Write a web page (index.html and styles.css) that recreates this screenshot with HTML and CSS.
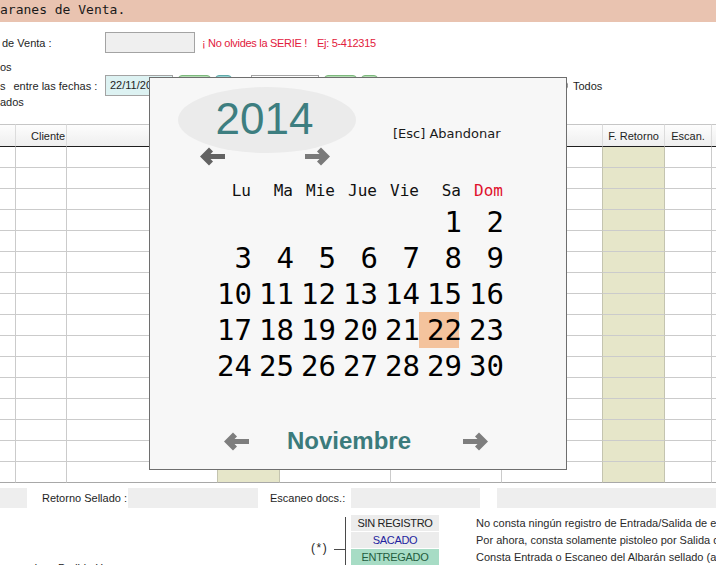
FILE: index.html
```html
<!DOCTYPE html>
<html lang="es">
<head>
<meta charset="utf-8">
<title>Albaranes de Venta</title>
<link rel="stylesheet" href="styles.css">
</head>
<body>
<div class="topbar">aranes de Venta.</div>

<div class="form">
  <div class="row r1">
    <span class="lbl lbl-venta">de Venta :</span>
    <span class="field gray"></span>
    <span class="warn">¡ No olvides la SERIE !</span><span class="warn ej">Ej: 5-412315</span>
  </div>
  <div class="row r2">os</div>
  <div class="row r3">
    <span class="lbl"><span>s</span><span class="lbl-gap">entre las fechas :</span></span>
    <span class="field date">22/11/2014</span>
    <span class="btn green wide"></span><span class="btn teal narrow"></span>
    <span class="field date2"></span>
    <span class="btn green wide"></span><span class="btn green narrow"></span>
    <span class="radio"></span><span class="todos">Todos</span>
  </div>
  <div class="row r4">ados</div>
</div>

<div class="grid-wrap">
<table class="grid">
  <colgroup>
    <col class="c1"><col class="c2"><col class="c3"><col class="c4"><col class="c5"><col class="c6"><col class="c7"><col class="c8"><col class="c9"><col class="c10">
  </colgroup>
  <thead>
    <tr><th></th><th class="th-cliente">Cliente</th><th></th><th></th><th></th><th></th><th></th><th>F. Retorno</th><th>Escan.</th><th></th></tr>
  </thead>
  <tbody>
    <tr><td></td><td></td><td></td><td></td><td></td><td></td><td></td><td></td><td></td><td></td></tr>
    <tr><td></td><td></td><td></td><td></td><td></td><td></td><td></td><td></td><td></td><td></td></tr>
    <tr><td></td><td></td><td></td><td></td><td></td><td></td><td></td><td></td><td></td><td></td></tr>
    <tr><td></td><td></td><td></td><td></td><td></td><td></td><td></td><td></td><td></td><td></td></tr>
    <tr><td></td><td></td><td></td><td></td><td></td><td></td><td></td><td></td><td></td><td></td></tr>
    <tr><td></td><td></td><td></td><td></td><td></td><td></td><td></td><td></td><td></td><td></td></tr>
    <tr><td></td><td></td><td></td><td></td><td></td><td></td><td></td><td></td><td></td><td></td></tr>
    <tr><td></td><td></td><td></td><td></td><td></td><td></td><td></td><td></td><td></td><td></td></tr>
    <tr><td></td><td></td><td></td><td></td><td></td><td></td><td></td><td></td><td></td><td></td></tr>
    <tr><td></td><td></td><td></td><td></td><td></td><td></td><td></td><td></td><td></td><td></td></tr>
    <tr><td></td><td></td><td></td><td></td><td></td><td></td><td></td><td></td><td></td><td></td></tr>
    <tr><td></td><td></td><td></td><td></td><td></td><td></td><td></td><td></td><td></td><td></td></tr>
    <tr><td></td><td></td><td></td><td></td><td></td><td></td><td></td><td></td><td></td><td></td></tr>
    <tr><td></td><td></td><td></td><td></td><td></td><td></td><td></td><td></td><td></td><td></td></tr>
    <tr><td></td><td></td><td></td><td></td><td></td><td></td><td></td><td></td><td></td><td></td></tr>
    <tr class="last"><td></td><td></td><td></td><td></td><td></td><td></td><td></td><td></td><td></td><td></td></tr>
  </tbody>
</table>
</div>

<div class="doc-row">
  <span class="box b1"></span>
  <span class="doc-lbl l1">Retorno Sellado :</span>
  <span class="box b2"></span>
  <span class="doc-lbl l2">Escaneo docs.:</span>
  <span class="box b3"></span>
  <span class="box b4"></span>
</div>

<div class="legend">
  <div class="legend-left">odos &nbsp; Pedido Hoy :</div>
  <div class="legend-star">(*)</div>
  <div class="bracket"><div class="tick"></div></div>
  <div class="legend-boxes">
    <div class="lg sin">SIN REGISTRO</div>
    <div class="lg sacado">SACADO</div>
    <div class="lg entregado">ENTREGADO</div>
  </div>
  <div class="legend-desc">
    <div>No consta ningún registro de Entrada/Salida de este albarán</div>
    <div>Por ahora, consta solamente pistoleo por Salida del almacén</div>
    <div>Consta Entrada o Escaneo del Albarán sellado (aunque no retorno)</div>
  </div>
</div>

<div class="cal">
  <div class="cal-head">
    <div class="year-block">
      <div class="year">2014</div>
      <div class="year-nav">
        <svg class="arrow a-dark" viewBox="0 0 25 19" width="25" height="19"><polygon points="0,9.5 9,0.5 13,4.5 10.5,7 25,7 25,12 10.5,12 13,14.5 9,18.5"/></svg>
        <svg class="arrow a-mid flip" viewBox="0 0 25 19" width="25" height="19"><polygon points="0,9.5 9,0.5 13,4.5 10.5,7 25,7 25,12 10.5,12 13,14.5 9,18.5"/></svg>
      </div>
    </div>
    <div class="esc">[Esc] Abandonar</div>
  </div>
  <div class="week">
    <span>Lu</span><span>Ma</span><span>Mie</span><span>Jue</span><span>Vie</span><span>Sa</span><span class="sun">Dom</span>
  </div>
  <div class="days">
    <span></span><span></span><span></span><span></span><span></span><span>1</span><span>2</span>
    <span>3</span><span>4</span><span>5</span><span>6</span><span>7</span><span>8</span><span>9</span>
    <span>10</span><span>11</span><span>12</span><span>13</span><span>14</span><span>15</span><span>16</span>
    <span>17</span><span>18</span><span>19</span><span>20</span><span>21</span><span class="sel">22</span><span>23</span>
    <span>24</span><span>25</span><span>26</span><span>27</span><span>28</span><span>29</span><span>30</span>
  </div>
  <div class="cal-foot">
    <svg class="arrow a-light" viewBox="0 0 25 19" width="25" height="19"><polygon points="0,9.5 9,0.5 13,4.5 10.5,7 25,7 25,12 10.5,12 13,14.5 9,18.5"/></svg>
    <div class="month">Noviembre</div>
    <svg class="arrow a-light flip" viewBox="0 0 25 19" width="25" height="19"><polygon points="0,9.5 9,0.5 13,4.5 10.5,7 25,7 25,12 10.5,12 13,14.5 9,18.5"/></svg>
  </div>
</div>
</body>
</html>
```

FILE: styles.css
```css
html, body {
  margin: 0;
  padding: 0;
}
body {
  width: 716px;
  height: 565px;
  overflow: hidden;
  position: relative;
  background: #ffffff;
  font-family: "Liberation Sans", Arial, sans-serif;
  font-size: 11px;
  color: #1e1e1e;
}

/* top bar */
.topbar {
  height: 22px;
  background: #e9c3b0;
  font-family: "DejaVu Sans Mono", monospace;
  font-size: 13px;
  line-height: 19px;
  color: #1a1a1a;
  white-space: nowrap;
}

/* form */
.form {
  display: flex;
  flex-direction: column;
}
.row {
  display: flex;
  align-items: center;
  white-space: nowrap;
}
.r1 { margin-top: 10px; height: 21px; }
.r2 { margin-top: 7px; height: 14px; line-height: 14px; }
.r3 { margin-top: 1px; height: 21px; }
.r4 { margin-top: -1px; height: 14px; line-height: 14px; }

.lbl { width: 105px; flex: none; display: flex; }
.lbl-venta { padding-left: 2px; box-sizing: border-box; }
.lbl-gap { margin-left: 8px; }

.field {
  box-sizing: border-box;
  height: 21px;
  border: 1px solid #a3a3a3;
  flex: none;
  line-height: 19px;
}
.field.gray { width: 90px; background: #efefef; }
.field.date {
  width: 68px;
  background: #ddf2f2;
  padding-left: 4px;
  overflow: hidden;
}
.field.date2 { width: 68px; background: #ffffff; margin-left: 19px; }

.warn {
  color: #e2203c;
  margin-left: 7px;
  letter-spacing: -0.3px;
}
.warn.ej { margin-left: 10px; }

.btn {
  box-sizing: border-box;
  height: 21px;
  flex: none;
  border-radius: 4px 4px 0 0;
  margin-left: 5px;
}
.btn.wide { width: 33px; }
.btn.narrow { width: 17px; margin-left: 4px; }
.btn.green { background: #b4dfb4; border: 1px solid #7db87d; }
.btn.teal { background: #95d2d2; border: 1px solid #5fa8a8; }

.radio {
  width: 13px;
  height: 13px;
  box-sizing: border-box;
  border: 1px solid #7a7a7a;
  border-radius: 50%;
  margin-left: 177px;
  flex: none;
}
.todos { margin-left: 5px; }

/* table */
.grid-wrap {
  margin-top: 15px;
  width: 716px;
  overflow: hidden;
}
.grid {
  table-layout: fixed;
  border-collapse: separate;
  border-spacing: 0;
  width: 742px;
}
.c1 { width: 16px; }
.c2 { width: 51px; }
.c3 { width: 151px; }
.c4 { width: 62px; }
.c5 { width: 111px; }
.c6 { width: 111px; }
.c7 { width: 101px; }
.c8 { width: 62px; }
.c9 { width: 47px; }
.c10 { width: 30px; }

.grid th {
  height: 21px;
  padding: 0;
  border-top: 1px solid #c6c6c6;
  border-bottom: 1px solid #1e1e1e;
  border-right: 1px solid #dcdcdc;
  background: linear-gradient(#fdfdfd, #eeeeee);
  font-weight: normal;
  font-size: 11px;
  text-align: center;
  vertical-align: middle;
  white-space: nowrap;
  overflow: hidden;
  color: #1e1e1e;
}
.grid th.th-cliente { text-align: left; padding-left: 15px; }

.grid td {
  height: 20px;
  padding: 0;
  border-right: 1px solid #cbcbcb;
  border-bottom: 1px solid #cbcbcb;
  background: #ffffff;
}
.grid td:nth-child(4),
.grid td:nth-child(8) {
  background: #e6e6c9;
  border-right-color: #c4c4b0;
}
.grid td:nth-child(3) { border-right-color: #c4c4b0; }
.grid td:nth-child(7) { border-right-color: #c4c4b0; }
.grid td:last-child,
.grid th:last-child { border-right: none; }
.grid tr.last td { border-bottom-color: #a8a8a8; }

/* documents row */
.doc-row {
  display: flex;
  align-items: center;
  height: 20px;
  margin-top: 5px;
  white-space: nowrap;
}
.box {
  height: 20px;
  background: #eeeeee;
  flex: none;
}
.b1 { width: 27px; }
.b2 { width: 130px; }
.b3 { width: 129px; }
.b4 { width: 219px; margin-left: 17px; }
.doc-lbl { flex: none; box-sizing: border-box; }
.l1 { width: 101px; padding-left: 15px; }
.l2 { width: 93px; padding-left: 12px; }

/* legend */
.legend {
  display: flex;
  margin-top: 7px;
  white-space: nowrap;
  width: 716px;
  height: 50px;
  overflow: hidden;
}
.legend-left {
  width: 311px;
  flex: none;
  padding-top: 46px;
  padding-left: 25px;
  box-sizing: border-box;
  line-height: 14px;
}
.legend-star {
  width: 17px;
  flex: none;
  padding-top: 25px;
  line-height: 16px;
  font-size: 12px;
  letter-spacing: 1.5px;
  margin-right: 6px;
}
.bracket {
  width: 11px;
  height: 50px;
  margin-top: 2px;
  border-right: 1px solid #4a4a4a;
  flex: none;
}
.tick {
  margin-top: 32px;
  height: 1px;
  background: #4a4a4a;
}
.legend-boxes {
  margin-left: 5px;
  width: 88px;
  flex: none;
  display: flex;
  flex-direction: column;
  gap: 1px;
}
.lg {
  height: 16px;
  line-height: 16px;
  text-align: center;
  letter-spacing: -0.3px;
}
.lg.sin { background: #ececec; color: #222222; }
.lg.sacado { background: #ececec; color: #1f1fa0; }
.lg.entregado { background: #a7dcc5; color: #245c3e; }
.legend-desc {
  margin-left: 37px;
  flex: 1;
  min-width: 0;
  overflow: hidden;
  display: flex;
  flex-direction: column;
  gap: 1px;
  color: #2a2a2a;
}
.legend-desc div { height: 16px; line-height: 16px; }

/* calendar popup */
.cal {
  position: absolute;
  left: 149px;
  top: 77px;
  width: 418px;
  height: 393px;
  box-sizing: border-box;
  border: 1px solid #6e6e6e;
  background: #f7f7f7;
  display: flex;
  flex-direction: column;
}
.cal-head {
  display: flex;
  align-items: flex-start;
}
.year-block {
  margin-left: 28px;
  margin-top: 9px;
  width: 178px;
  flex: none;
}
.year {
  width: 178px;
  height: 66px;
  box-sizing: border-box;
  border-radius: 50%;
  background: #ebebeb;
  display: flex;
  align-items: center;
  justify-content: center;
  padding: 0 5px 2px 0;
  font-family: "Liberation Sans", Arial, sans-serif;
  font-size: 44px;
  color: #3d7e80;
}
.year-nav {
  display: flex;
  margin-top: -6px;
  height: 19px;
  padding-left: 22px;
  gap: 80px;
}
.arrow { display: block; flex: none; }
.arrow.flip { transform: scaleX(-1); }
.a-dark { fill: #636363; }
.a-mid { fill: #7a7a7a; }
.a-light { fill: #7e7e7e; }

.esc {
  margin-left: 37px;
  margin-top: 48px;
  font-family: "DejaVu Sans", Verdana, sans-serif;
  font-size: 13px;
  line-height: 16px;
  color: #1a1a1a;
  white-space: nowrap;
}

.week {
  display: grid;
  grid-template-columns: repeat(7, 40px);
  column-gap: 2px;
  margin-left: 59px;
  margin-top: 15px;
  height: 20px;
  font-family: "DejaVu Sans Mono", monospace;
  font-size: 16px;
  line-height: 20px;
  color: #111111;
}
.week span { text-align: right; margin-right: -2px; }
.week .sun { color: #e0102c; }

.days {
  display: grid;
  grid-template-columns: repeat(7, 40px);
  grid-auto-rows: 36px;
  column-gap: 2px;
  margin-left: 59px;
  margin-top: 3px;
  font-family: "DejaVu Sans Mono", monospace;
  font-size: 29px;
  line-height: 36px;
  color: #000000;
}
.days span {
  text-align: right;
  margin-right: -3px;
}
.days .sel {
  background: linear-gradient(#f4c39d, #f4c39d) no-repeat 0 0 / 40px 100%;
}

.cal-foot {
  display: flex;
  align-items: center;
  height: 30px;
  margin-top: 42px;
}
.cal-foot .arrow:first-child { margin-left: 74px; }
.cal-foot .arrow.flip { margin-left: 14px; }
.month {
  width: 200px;
  flex: none;
  text-align: center;
  font-family: "Liberation Sans", Arial, sans-serif;
  font-weight: bold;
  font-size: 24px;
  line-height: 30px;
  color: #3b7b7c;
}
```
